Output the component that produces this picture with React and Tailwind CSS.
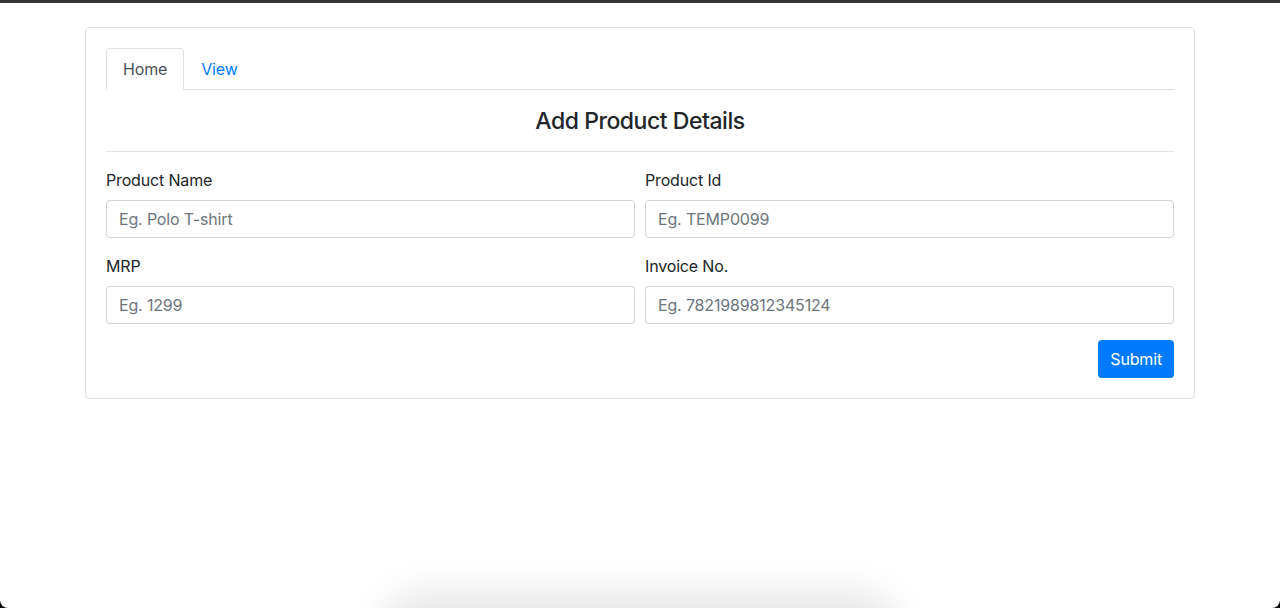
import React, { useState } from 'react';

const fields = [
  [
    { label: 'Product Name', placeholder: 'Eg. Polo T-shirt' },
    { label: 'Product Id', placeholder: 'Eg. TEMP0099' },
  ],
  [
    { label: 'MRP', placeholder: 'Eg. 1299' },
    { label: 'Invoice No.', placeholder: 'Eg. 7821989812345124' },
  ],
];

export default function App() {
  const [tab, setTab] = useState('home');

  return (
    <div className="h-[608px] bg-black overflow-hidden tracking-[-0.01em]" style={{ fontFamily: 'Inter, "Noto Sans", sans-serif' }}>
      <div className="relative h-full bg-white rounded-b-[8px] overflow-hidden">
        {/* Window top edge */}
        <div className="h-[3px] bg-[#38383a]" />

        <div className="w-[1110px] mx-auto mt-[24px] border border-[#dee2e6] rounded-[4px] p-5 text-[#212529]">
          {/* Tabs */}
          <div className="flex border-b border-[#dee2e6]">
            <button
              onClick={() => setTab('home')}
              className="-mb-px px-4 py-2 leading-6 text-base text-[#495057] bg-white border border-[#dee2e6] border-b-white rounded-t-[4px]"
            >
              Home
            </button>
            <button
              onClick={() => setTab('view')}
              className="-mb-px px-4 py-2 leading-6 text-base text-[#007bff] border border-transparent"
            >
              View
            </button>
          </div>

          <h4 className="mt-[17px] text-[23px] leading-[29px] font-medium text-center tracking-[-0.02em]">Add Product Details</h4>
          <hr className="mt-[15px] mb-4 border-t border-[#e5e5e5]" />

          <form onSubmit={(e) => e.preventDefault()}>
            {fields.map((row, i) => (
              <div key={i} className="grid grid-cols-2 gap-x-[10px] mb-4">
                {row.map((f) => (
                  <div key={f.label}>
                    <label className="block mb-2 text-base leading-6">{f.label}</label>
                    <input
                      type="text"
                      placeholder={f.placeholder}
                      className="w-full h-[38px] px-3 py-1.5 text-base text-[#495057] border border-[#ced4da] rounded-[4px] outline-none placeholder:text-[#6c757d]"
                    />
                  </div>
                ))}
              </div>
            ))}
            <div className="flex justify-end">
              <button type="submit" className="h-[38px] px-3 text-base leading-6 text-white bg-[#007bff] rounded-[4px]">
                Submit
              </button>
            </div>
          </form>
        </div>

        {/* Shadow of an element below the viewport */}
        <div className="absolute left-[400px] top-[612px] w-[480px] h-[40px] rounded-[20px] shadow-[0_0_40px_20px_rgba(0,0,0,0.1)]" />
      </div>
    </div>
  );
}
